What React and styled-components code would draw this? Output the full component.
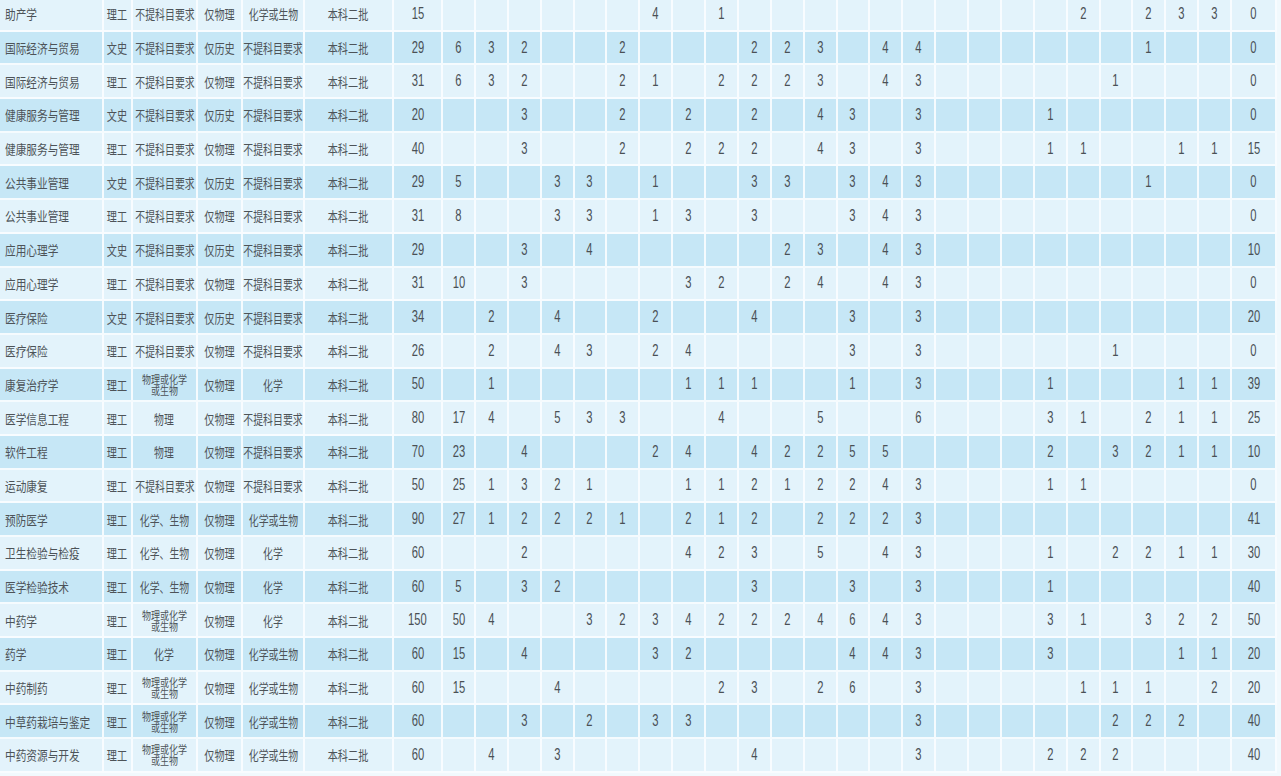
import React from "react";
import styled, { createGlobalStyle } from "styled-components";

const Global = createGlobalStyle`
  html, body { margin: 0; padding: 0; background: #f1f9fd; overflow: hidden; }
  body { font-family: "Noto Sans CJK SC", "Liberation Sans", sans-serif; }
`;

const FIXED = [104, 29, 65, 45, 62, 89, 49];
const TEMPLATE = `${FIXED.map((w) => w + "px").join(" ")} repeat(24, 32.875px) 45px`;

const LIGHT = "#e3f3fb";
const DARK = "#c6e7f6";
const LINE = "rgba(250, 253, 255, 0.9)";

const Sheet = styled.div`
  display: flex;
  flex-direction: column;
  align-items: flex-start;
  margin-top: -2px;
`;

const Row = styled.div`
  display: grid;
  grid-template-columns: ${TEMPLATE};
  height: 33.7px;
  background: ${(p) => (p.$alt ? DARK : LIGHT)};
`;

const Cell = styled.div`
  display: flex;
  align-items: center;
  justify-content: ${(p) => (p.$left ? "flex-start" : "center")};
  padding-left: ${(p) => (p.$left ? "5px" : "0")};
  border-right: 2px solid ${LINE};
  border-bottom: 2px solid ${LINE};
  box-sizing: border-box;
  overflow: visible;
  white-space: nowrap;
  color: #4d5358;
`;

const Han = styled.span`
  display: inline-block;
  font-family: "Noto Sans CJK SC", sans-serif;
  font-size: 13px;
  line-height: 14px;
  transform: scaleX(${(p) => p.$sx || 0.78});
  transform-origin: ${(p) => (p.$left ? "left center" : "center")};
  margin-top: 1px;
`;

const Two = styled.span`
  display: inline-block;
  font-family: "Noto Sans CJK SC", sans-serif;
  font-size: 11px;
  line-height: 11px;
  text-align: center;
  transform: scaleX(0.82);
  white-space: pre;
  margin-top: 1px;
`;

const Num = styled.span`
  display: inline-block;
  font-family: "Liberation Sans", "DejaVu Sans", sans-serif;
  font-size: 16px;
  line-height: 16px;
  transform: scaleX(0.7);
  color: #4a5055;
`;

const WL = "不提科目要求";
const WH = "物理或化学\n或生物";

// name, type, subj1, subj2, subj3, plan, {col: value}, last
const ROWS = [
  ["助产学", "理工", WL, "仅物理", "化学或生物", "15", { 6: 4, 8: 1, 19: 2, 21: 2, 22: 3, 23: 3 }, "0"],
  ["国际经济与贸易", "文史", WL, "仅历史", WL, "29", { 0: 6, 1: 3, 2: 2, 5: 2, 9: 2, 10: 2, 11: 3, 13: 4, 14: 4, 21: 1 }, "0"],
  ["国际经济与贸易", "理工", WL, "仅物理", WL, "31", { 0: 6, 1: 3, 2: 2, 5: 2, 6: 1, 8: 2, 9: 2, 10: 2, 11: 3, 13: 4, 14: 3, 20: 1 }, "0"],
  ["健康服务与管理", "文史", WL, "仅历史", WL, "20", { 2: 3, 5: 2, 7: 2, 9: 2, 11: 4, 12: 3, 14: 3, 18: 1 }, "0"],
  ["健康服务与管理", "理工", WL, "仅物理", WL, "40", { 2: 3, 5: 2, 7: 2, 8: 2, 9: 2, 11: 4, 12: 3, 14: 3, 18: 1, 19: 1, 22: 1, 23: 1 }, "15"],
  ["公共事业管理", "文史", WL, "仅历史", WL, "29", { 0: 5, 3: 3, 4: 3, 6: 1, 9: 3, 10: 3, 12: 3, 13: 4, 14: 3, 21: 1 }, "0"],
  ["公共事业管理", "理工", WL, "仅物理", WL, "31", { 0: 8, 3: 3, 4: 3, 6: 1, 7: 3, 9: 3, 12: 3, 13: 4, 14: 3 }, "0"],
  ["应用心理学", "文史", WL, "仅历史", WL, "29", { 2: 3, 4: 4, 10: 2, 11: 3, 13: 4, 14: 3 }, "10"],
  ["应用心理学", "理工", WL, "仅物理", WL, "31", { 0: 10, 2: 3, 7: 3, 8: 2, 10: 2, 11: 4, 13: 4, 14: 3 }, "0"],
  ["医疗保险", "文史", WL, "仅历史", WL, "34", { 1: 2, 3: 4, 6: 2, 9: 4, 12: 3, 14: 3 }, "20"],
  ["医疗保险", "理工", WL, "仅物理", WL, "26", { 1: 2, 3: 4, 4: 3, 6: 2, 7: 4, 12: 3, 14: 3, 20: 1 }, "0"],
  ["康复治疗学", "理工", WH, "仅物理", "化学", "50", { 1: 1, 7: 1, 8: 1, 9: 1, 12: 1, 14: 3, 18: 1, 22: 1, 23: 1 }, "39"],
  ["医学信息工程", "理工", "物理", "仅物理", WL, "80", { 0: 17, 1: 4, 3: 5, 4: 3, 5: 3, 8: 4, 11: 5, 14: 6, 18: 3, 19: 1, 21: 2, 22: 1, 23: 1 }, "25"],
  ["软件工程", "理工", "物理", "仅物理", WL, "70", { 0: 23, 2: 4, 6: 2, 7: 4, 9: 4, 10: 2, 11: 2, 12: 5, 13: 5, 18: 2, 20: 3, 21: 2, 22: 1, 23: 1 }, "10"],
  ["运动康复", "理工", WL, "仅物理", WL, "50", { 0: 25, 1: 1, 2: 3, 3: 2, 4: 1, 7: 1, 8: 1, 9: 2, 10: 1, 11: 2, 12: 2, 13: 4, 14: 3, 18: 1, 19: 1 }, "0"],
  ["预防医学", "理工", "化学、生物", "仅物理", "化学或生物", "90", { 0: 27, 1: 1, 2: 2, 3: 2, 4: 2, 5: 1, 7: 2, 8: 1, 9: 2, 11: 2, 12: 2, 13: 2, 14: 3 }, "41"],
  ["卫生检验与检疫", "理工", "化学、生物", "仅物理", "化学", "60", { 2: 2, 7: 4, 8: 2, 9: 3, 11: 5, 13: 4, 14: 3, 18: 1, 20: 2, 21: 2, 22: 1, 23: 1 }, "30"],
  ["医学检验技术", "理工", "化学、生物", "仅物理", "化学", "60", { 0: 5, 2: 3, 3: 2, 9: 3, 12: 3, 14: 3, 18: 1 }, "40"],
  ["中药学", "理工", WH, "仅物理", "化学", "150", { 0: 50, 1: 4, 4: 3, 5: 2, 6: 3, 7: 4, 8: 2, 9: 2, 10: 2, 11: 4, 12: 6, 13: 4, 14: 3, 18: 3, 19: 1, 21: 3, 22: 2, 23: 2 }, "50"],
  ["药学", "理工", "化学", "仅物理", "化学或生物", "60", { 0: 15, 2: 4, 6: 3, 7: 2, 12: 4, 13: 4, 14: 3, 18: 3, 22: 1, 23: 1 }, "20"],
  ["中药制药", "理工", WH, "仅物理", "化学或生物", "60", { 0: 15, 3: 4, 8: 2, 9: 3, 11: 2, 12: 6, 14: 3, 19: 1, 20: 1, 21: 1, 23: 2 }, "20"],
  ["中草药栽培与鉴定", "理工", WH, "仅物理", "化学或生物", "60", { 2: 3, 4: 2, 6: 3, 7: 3, 14: 3, 20: 2, 21: 2, 22: 2 }, "40"],
  ["中药资源与开发", "理工", WH, "仅物理", "化学或生物", "60", { 1: 4, 3: 3, 9: 4, 14: 3, 18: 2, 19: 2, 20: 2 }, "40"],
];

function TextCell({ value, left, sx }) {
  if (value.includes("\n")) {
    return (
      <Cell>
        <Two>{value}</Two>
      </Cell>
    );
  }
  return (
    <Cell $left={left}>
      <Han $left={left} $sx={sx}>{value}</Han>
    </Cell>
  );
}

function NumCell({ value }) {
  return <Cell>{value !== undefined && value !== "" ? <Num>{value}</Num> : null}</Cell>;
}

export default function App() {
  return (
    <>
      <Global />
      <Sheet>
        {ROWS.map(([name, type, s1, s2, s3, plan, nums, last], r) => (
          <Row key={r} $alt={r % 2 === 1}>
            <TextCell value={name} left sx={0.82} />
            <TextCell value={type} />
            <TextCell value={s1} sx={0.76} />
            <TextCell value={s2} />
            <TextCell value={s3} sx={0.76} />
            <TextCell value="本科二批" />
            <NumCell value={plan} />
            {Array.from({ length: 24 }, (_, i) => (
              <NumCell key={i} value={nums[i]} />
            ))}
            <NumCell value={last} />
          </Row>
        ))}
      </Sheet>
    </>
  );
}
